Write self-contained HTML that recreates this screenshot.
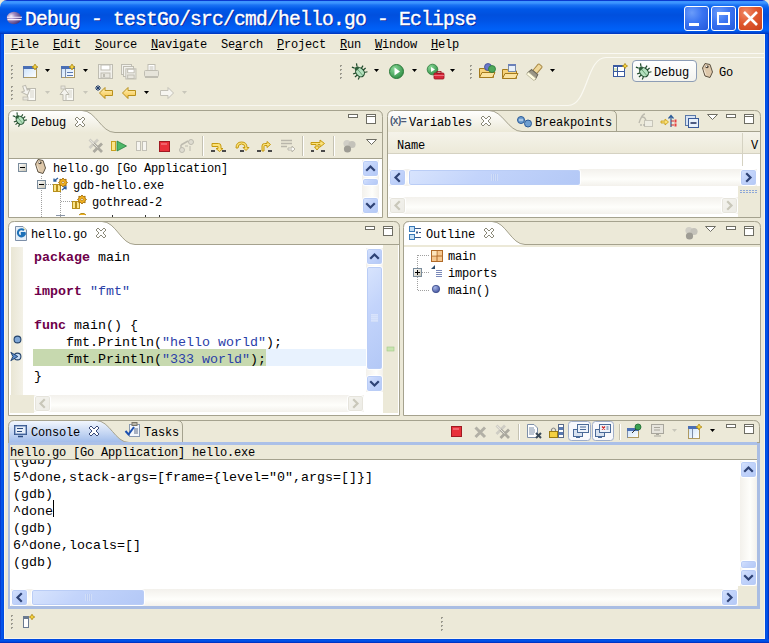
<!DOCTYPE html>
<html><head><meta charset="utf-8">
<style>
*{margin:0;padding:0;box-sizing:border-box}
html,body{width:769px;height:643px;overflow:hidden;background:#ECE9D8;position:relative;font-family:"Liberation Mono",monospace;}
.a{position:absolute;display:block}
.ui{font-family:"Liberation Mono",monospace;font-size:12px;letter-spacing:-0.2px;color:#000;white-space:pre;line-height:14px}
.code{font-family:"Liberation Mono",monospace;font-size:13.33px;white-space:pre;line-height:17px;color:#000}
.kw{color:#6E004A;font-weight:bold}
.st{color:#2A40A8}
.u{text-decoration:underline;text-underline-offset:1px}
</style></head><body>
<div class="a" style="left:0px;top:0px;width:769px;height:34px;background:linear-gradient(to bottom,#0A3AD0 0,#0A3AD0 1px,#3D95FF 1px,#3D95FF 3px,#1A72F4 5px,#0058E8 9px,#0050DE 15px,#0054E6 21px,#005CF2 26px,#0062F8 30px,#0050E0 32px,#0032B8 34px);border-radius:7px 7px 0 0"></div>
<div class="a" style="left:4px;top:34px;width:761px;height:1px;background:#F4F2EC"></div>
<div class="a " style="left:25px;top:7px;font-family:'Liberation Mono',monospace;font-weight:normal;-webkit-text-stroke:0.4px #fff;font-size:19.6px;letter-spacing:-0.76px;color:#fff;white-space:pre;text-shadow:1px 1px 0 #0A1E90;line-height:26px">Debug - testGo/src/cmd/hello.go - Eclipse</div>
<div class="a" style="left:684px;top:6px;width:25px;height:25px;border:1px solid #fff;border-radius:3px;background:radial-gradient(circle at 30% 25%,#6A9CFA 0,#3A74F2 45%,#2358DA 100%)"></div>
<div class="a" style="left:711px;top:6px;width:25px;height:25px;border:1px solid #fff;border-radius:3px;background:radial-gradient(circle at 30% 25%,#6A9CFA 0,#3A74F2 45%,#2358DA 100%)"></div>
<div class="a" style="left:738px;top:6px;width:25px;height:25px;border:1px solid #fff;border-radius:3px;background:radial-gradient(circle at 30% 25%,#F08A68 0,#E0582E 45%,#C8401A 100%)"></div>
<div class="a" style="left:689px;top:23px;width:10px;height:3px;background:#fff"></div>
<div class="a" style="left:717px;top:12px;width:13px;height:13px;border:2px solid #fff;border-top-width:3px"></div>
<svg class="a" style="left:738px;top:6px;" width="25" height="25" viewBox="0 0 25 25"><path d="M6 6L19 19M19 6L6 19" stroke="#fff" stroke-width="2.6"/></svg>
<div class="a" style="left:0px;top:34px;width:4px;height:609px;background:linear-gradient(to right,#0029B8,#0A4FE8 1px,#0058EE 2px,#0046DC)"></div>
<div class="a" style="left:4px;top:34px;width:1px;height:605px;background:#F6F4EC"></div>
<div class="a" style="left:765px;top:34px;width:4px;height:609px;background:linear-gradient(to right,#0046DC,#0058EE 2px,#0029B8)"></div>
<div class="a" style="left:764px;top:34px;width:1px;height:605px;background:#F6F4EC"></div>
<div class="a" style="left:0px;top:639px;width:769px;height:4px;background:linear-gradient(to bottom,#0046DC,#0058EE 2px,#0029B8)"></div>
<div class="a" style="left:4px;top:638px;width:761px;height:1px;background:#F6F4EC"></div>
<div class="a ui" style="left:11px;top:38px;"><span class="u">F</span>ile</div>
<div class="a ui" style="left:53px;top:38px;"><span class="u">E</span>dit</div>
<div class="a ui" style="left:95px;top:38px;"><span class="u">S</span>ource</div>
<div class="a ui" style="left:151px;top:38px;"><span class="u">N</span>avigate</div>
<div class="a ui" style="left:221px;top:38px;">Se<span class="u">a</span>rch</div>
<div class="a ui" style="left:277px;top:38px;"><span class="u">P</span>roject</div>
<div class="a ui" style="left:340px;top:38px;"><span class="u">R</span>un</div>
<div class="a ui" style="left:375px;top:38px;"><span class="u">W</span>indow</div>
<div class="a ui" style="left:431px;top:38px;"><span class="u">H</span>elp</div>
<div class="a" style="left:4px;top:53px;width:760px;height:1px;background:#FAF9F4"></div>
<div class="a" style="left:8px;top:110px;width:375px;height:108px;border:1px solid #A5A28E;border-radius:6px 6px 0 0;background:#ECE9D8"></div>
<svg class="a" style="left:8px;top:110px;" width="375" height="23" viewBox="0 0 375 23"><defs><linearGradient id="g1" x1="0" y1="0" x2="0" y2="1"><stop offset="0" stop-color="#fff"/><stop offset="1" stop-color="#ECE9D8"/></linearGradient></defs><path d="M0 23 V6.5 Q0 0 6.5 0 H368.5 Q375 0 375 6.5 V23 Z" fill="#ECE9D8"/><path d="M0.5 23 L0.5 6.5 Q0.5 0.5 6.5 0.5 L74 0.5 C88 0.5 93 22.5 107 22.5 L375 22.5 L375 23 L0.5 23 Z" fill="url(#g1)"/><path d="M0.5 23 L0.5 6.5 Q0.5 0.5 6.5 0.5 L368.5 0.5 Q374.5 0.5 374.5 6.5 V23" fill="none" stroke="#A5A28E" stroke-width="1"/><path d="M74 0.5 C88 0.5 93 22.5 107 22.5 L374.5 22.5" fill="none" stroke="#A5A28E" stroke-width="1"/></svg>
<div class="a" style="left:9px;top:133px;width:373px;height:25px;background:#ECE9D8"></div>
<div class="a" style="left:9px;top:158px;width:373px;height:59px;background:#fff;border-top:1px solid #A5A28E"></div>
<div class="a ui" style="left:53px;top:162px;">hello.go [Go Application]</div>
<div class="a ui" style="left:73px;top:179px;">gdb-hello.exe</div>
<div class="a ui" style="left:92px;top:196px;">gothread-2</div>
<div class="a" style="left:362px;top:160px;width:17px;height:54px;background:linear-gradient(to right,#F3F1EC,#FEFEFB 60%,#F3F1EC);"></div>
<div class="a" style="left:362px;top:160px;width:17px;height:17px;background:linear-gradient(135deg,#D8E4FD 0%,#C3D4FB 40%,#B3C8F6 100%);border:1px solid #fff;border-radius:3px;box-shadow:inset 0 0 0 1px #BACDF6;"></div>
<svg class="a" style="left:362px;top:160px;" width="17" height="17" viewBox="0 0 17 17"><path d="M5 10 L8.5 6.5 L12 10" fill="none" stroke="#2E4275" stroke-width="2.2" stroke-linecap="square"/></svg>
<div class="a" style="left:362px;top:197px;width:17px;height:17px;background:linear-gradient(135deg,#D8E4FD 0%,#C3D4FB 40%,#B3C8F6 100%);border:1px solid #fff;border-radius:3px;box-shadow:inset 0 0 0 1px #BACDF6;"></div>
<svg class="a" style="left:362px;top:197px;" width="17" height="17" viewBox="0 0 17 17"><path d="M5 7 L8.5 10.5 L12 7" fill="none" stroke="#2E4275" stroke-width="2.2" stroke-linecap="square"/></svg>
<div class="a" style="left:362px;top:178px;width:17px;height:8px;background:linear-gradient(135deg,#D8E4FD 0%,#C3D4FB 40%,#B3C8F6 100%);border:1px solid #fff;border-radius:3px;box-shadow:inset 0 0 0 1px #BACDF6;"></div>
<div class="a ui" style="left:31px;top:116px;">Debug</div>
<div class="a" style="left:387px;top:110px;width:374px;height:108px;border:1px solid #A5A28E;border-radius:6px 6px 0 0;background:#ECE9D8"></div>
<svg class="a" style="left:387px;top:110px;" width="374" height="22" viewBox="0 0 374 22"><defs><linearGradient id="g2" x1="0" y1="0" x2="0" y2="1"><stop offset="0" stop-color="#fff"/><stop offset="1" stop-color="#ECE9D8"/></linearGradient></defs><path d="M0 22 V6.5 Q0 0 6.5 0 H367.5 Q374 0 374 6.5 V22 Z" fill="#ECE9D8"/><path d="M0.5 22 L0.5 6.5 Q0.5 0.5 6.5 0.5 L102 0.5 C116 0.5 121 21.5 135 21.5 L374 21.5 L374 22 L0.5 22 Z" fill="url(#g2)"/><path d="M0.5 22 L0.5 6.5 Q0.5 0.5 6.5 0.5 L367.5 0.5 Q373.5 0.5 373.5 6.5 V22" fill="none" stroke="#A5A28E" stroke-width="1"/><path d="M102 0.5 C116 0.5 121 21.5 135 21.5 L373.5 21.5" fill="none" stroke="#A5A28E" stroke-width="1"/></svg>
<div class="a ui" style="left:409px;top:116px;">Variables</div>
<div class="a ui" style="left:535px;top:116px;">Breakpoints</div>
<svg class="a" style="left:600px;top:110px;" width="20" height="22" viewBox="0 0 20 22"><path d="M16.5 22V6Q16.5 0.5 11 0.5" fill="none" stroke="#A5A28E"/></svg>
<div class="a" style="left:388px;top:132px;width:372px;height:22px;background:linear-gradient(to bottom,#F5F3EA,#ECE9D8)"></div>
<div class="a" style="left:388px;top:153px;width:372px;height:1px;background:#D5D2C2"></div>
<div class="a ui" style="left:397px;top:139px;">Name</div>
<div class="a" style="left:388px;top:154px;width:372px;height:63px;background:#fff"></div>
<div class="a" style="left:389px;top:169px;width:368px;height:17px;background:linear-gradient(to bottom,#F3F1EC,#FEFEFB 60%,#F3F1EC);"></div>
<div class="a" style="left:389px;top:169px;width:17px;height:17px;background:linear-gradient(135deg,#D8E4FD 0%,#C3D4FB 40%,#B3C8F6 100%);border:1px solid #fff;border-radius:3px;box-shadow:inset 0 0 0 1px #BACDF6;"></div>
<svg class="a" style="left:389px;top:169px;" width="17" height="17" viewBox="0 0 17 17"><path d="M10 5 L6.5 8.5 L10 12" fill="none" stroke="#2E4275" stroke-width="2.2" stroke-linecap="square"/></svg>
<div class="a" style="left:740px;top:169px;width:17px;height:17px;background:linear-gradient(135deg,#D8E4FD 0%,#C3D4FB 40%,#B3C8F6 100%);border:1px solid #fff;border-radius:3px;box-shadow:inset 0 0 0 1px #BACDF6;"></div>
<svg class="a" style="left:740px;top:169px;" width="17" height="17" viewBox="0 0 17 17"><path d="M7 5 L10.5 8.5 L7 12" fill="none" stroke="#2E4275" stroke-width="2.2" stroke-linecap="square"/></svg>
<div class="a" style="left:408px;top:169px;width:173px;height:17px;background:linear-gradient(135deg,#D8E4FD 0%,#C3D4FB 40%,#B3C8F6 100%);border:1px solid #fff;border-radius:3px;box-shadow:inset 0 0 0 1px #BACDF6;"></div>
<svg class="a" style="left:490px;top:173px;" width="8" height="9" viewBox="0 0 8 9"><path d="M1.5 1v7M3.5 1v7M5.5 1v7M7.5 1v7" stroke="#EEF3FE" stroke-width="1"/><path d="M2 1v7M4 1v7M6 1v7M8 1v7" stroke="#B2C6F2" stroke-width="1"/></svg>
<div class="a" style="left:389px;top:197px;width:349px;height:17px;background:linear-gradient(to bottom,#F3F1EC,#FEFEFB 60%,#F3F1EC);"></div>
<div class="a" style="left:389px;top:197px;width:17px;height:17px;background:linear-gradient(135deg,#F4F3EE,#ECEBE5);border:1px solid #fff;border-radius:3px;box-shadow:inset 0 0 0 1px #E6E4DC;"></div>
<svg class="a" style="left:389px;top:197px;" width="17" height="17" viewBox="0 0 17 17"><path d="M10 5 L6.5 8.5 L10 12" fill="none" stroke="#C9C7BA" stroke-width="2.2" stroke-linecap="square"/></svg>
<div class="a" style="left:721px;top:197px;width:17px;height:17px;background:linear-gradient(135deg,#F4F3EE,#ECEBE5);border:1px solid #fff;border-radius:3px;box-shadow:inset 0 0 0 1px #E6E4DC;"></div>
<svg class="a" style="left:721px;top:197px;" width="17" height="17" viewBox="0 0 17 17"><path d="M7 5 L10.5 8.5 L7 12" fill="none" stroke="#C9C7BA" stroke-width="2.2" stroke-linecap="square"/></svg>
<div class="a" style="left:738px;top:186px;width:22px;height:31px;background:#ECE9D8"></div>
<div class="a" style="left:8px;top:221px;width:392px;height:195px;border:1px solid #A5A28E;border-radius:6px 6px 0 0;background:#fff"></div>
<svg class="a" style="left:8px;top:221px;" width="392" height="24" viewBox="0 0 392 24"><defs><linearGradient id="g3" x1="0" y1="0" x2="0" y2="1"><stop offset="0" stop-color="#fff"/><stop offset="1" stop-color="#fff"/></linearGradient></defs><path d="M0 24 V6.5 Q0 0 6.5 0 H385.5 Q392 0 392 6.5 V24 Z" fill="#ECE9D8"/><path d="M0.5 24 L0.5 6.5 Q0.5 0.5 6.5 0.5 L94 0.5 C108 0.5 113 23.5 127 23.5 L392 23.5 L392 24 L0.5 24 Z" fill="url(#g3)"/><path d="M0.5 24 L0.5 6.5 Q0.5 0.5 6.5 0.5 L385.5 0.5 Q391.5 0.5 391.5 6.5 V24" fill="none" stroke="#A5A28E" stroke-width="1"/><path d="M94 0.5 C108 0.5 113 23.5 127 23.5 L391.5 23.5" fill="none" stroke="#A5A28E" stroke-width="1"/></svg>
<div class="a ui" style="left:31px;top:228px;">hello.go</div>
<div class="a" style="left:11px;top:247px;width:12px;height:148px;background:linear-gradient(to right,#E9E6D4,#F3F1E7)"></div>
<div class="a" style="left:23px;top:247px;width:9px;height:148px;background:#fff"></div>
<div class="a" style="left:33px;top:349px;width:233px;height:17px;background:#C7D9AF"></div>
<div class="a" style="left:266px;top:349px;width:100px;height:17px;background:#E8F2FE"></div>
<div class="a code" style="left:34px;top:249px;"><span class="kw">package</span> main</div>
<div class="a code" style="left:34px;top:266px;"></div>
<div class="a code" style="left:34px;top:283px;"><span class="kw">import</span> <span class="st">"fmt"</span></div>
<div class="a code" style="left:34px;top:300px;"></div>
<div class="a code" style="left:34px;top:317px;"><span class="kw">func</span> main() {</div>
<div class="a code" style="left:34px;top:334px;">    fmt.Println(<span class="st">"hello world"</span>);</div>
<div class="a code" style="left:34px;top:351px;">    fmt.Println(<span class="st">"333 world"</span>);</div>
<div class="a code" style="left:34px;top:368px;">}</div>
<div class="a" style="left:366px;top:248px;width:17px;height:144px;background:linear-gradient(to right,#F3F1EC,#FEFEFB 60%,#F3F1EC);"></div>
<div class="a" style="left:366px;top:248px;width:17px;height:17px;background:linear-gradient(135deg,#D8E4FD 0%,#C3D4FB 40%,#B3C8F6 100%);border:1px solid #fff;border-radius:3px;box-shadow:inset 0 0 0 1px #BACDF6;"></div>
<svg class="a" style="left:366px;top:248px;" width="17" height="17" viewBox="0 0 17 17"><path d="M5 10 L8.5 6.5 L12 10" fill="none" stroke="#2E4275" stroke-width="2.2" stroke-linecap="square"/></svg>
<div class="a" style="left:366px;top:375px;width:17px;height:17px;background:linear-gradient(135deg,#D8E4FD 0%,#C3D4FB 40%,#B3C8F6 100%);border:1px solid #fff;border-radius:3px;box-shadow:inset 0 0 0 1px #BACDF6;"></div>
<svg class="a" style="left:366px;top:375px;" width="17" height="17" viewBox="0 0 17 17"><path d="M5 7 L8.5 10.5 L12 7" fill="none" stroke="#2E4275" stroke-width="2.2" stroke-linecap="square"/></svg>
<div class="a" style="left:366px;top:266px;width:17px;height:104px;background:linear-gradient(135deg,#D8E4FD 0%,#C3D4FB 40%,#B3C8F6 100%);border:1px solid #fff;border-radius:3px;box-shadow:inset 0 0 0 1px #BACDF6;"></div>
<svg class="a" style="left:366px;top:314px;" width="17" height="8" viewBox="0 0 17 8"><path d="M5 1.5h7M5 3.5h7M5 5.5h7M5 7.5h7" stroke="#B2C6F2" stroke-width="1"/><path d="M5 1h7M5 3h7M5 5h7M5 7h7" stroke="#EEF3FE" stroke-width="1"/></svg>
<div class="a" style="left:383px;top:245px;width:15px;height:168px;background:#ECE9D8"></div>
<div class="a" style="left:34px;top:395px;width:330px;height:17px;background:linear-gradient(to bottom,#F3F1EC,#FEFEFB 60%,#F3F1EC);"></div>
<div class="a" style="left:34px;top:395px;width:17px;height:17px;background:linear-gradient(135deg,#F4F3EE,#ECEBE5);border:1px solid #fff;border-radius:3px;box-shadow:inset 0 0 0 1px #E6E4DC;"></div>
<svg class="a" style="left:34px;top:395px;" width="17" height="17" viewBox="0 0 17 17"><path d="M10 5 L6.5 8.5 L10 12" fill="none" stroke="#C9C7BA" stroke-width="2.2" stroke-linecap="square"/></svg>
<div class="a" style="left:347px;top:395px;width:17px;height:17px;background:linear-gradient(135deg,#F4F3EE,#ECEBE5);border:1px solid #fff;border-radius:3px;box-shadow:inset 0 0 0 1px #E6E4DC;"></div>
<svg class="a" style="left:347px;top:395px;" width="17" height="17" viewBox="0 0 17 17"><path d="M7 5 L10.5 8.5 L7 12" fill="none" stroke="#C9C7BA" stroke-width="2.2" stroke-linecap="square"/></svg>
<div class="a" style="left:10px;top:395px;width:24px;height:18px;background:#ECE9D8"></div>
<div class="a" style="left:403px;top:221px;width:358px;height:195px;border:1px solid #A5A28E;border-radius:6px 6px 0 0;background:#fff"></div>
<svg class="a" style="left:403px;top:221px;" width="358" height="24" viewBox="0 0 358 24"><defs><linearGradient id="g4" x1="0" y1="0" x2="0" y2="1"><stop offset="0" stop-color="#fff"/><stop offset="1" stop-color="#fff"/></linearGradient></defs><path d="M0 24 V6.5 Q0 0 6.5 0 H351.5 Q358 0 358 6.5 V24 Z" fill="#ECE9D8"/><path d="M0.5 24 L0.5 6.5 Q0.5 0.5 6.5 0.5 L89 0.5 C103 0.5 108 23.5 122 23.5 L358 23.5 L358 24 L0.5 24 Z" fill="url(#g4)"/><path d="M0.5 24 L0.5 6.5 Q0.5 0.5 6.5 0.5 L351.5 0.5 Q357.5 0.5 357.5 6.5 V24" fill="none" stroke="#A5A28E" stroke-width="1"/><path d="M89 0.5 C103 0.5 108 23.5 122 23.5 L357.5 23.5" fill="none" stroke="#A5A28E" stroke-width="1"/></svg>
<div class="a" style="left:404px;top:245px;width:356px;height:2px;background:#ECE9D8"></div>
<div class="a ui" style="left:426px;top:228px;">Outline</div>
<div class="a ui" style="left:448px;top:250px;">main</div>
<div class="a ui" style="left:448px;top:267px;">imports</div>
<div class="a ui" style="left:448px;top:284px;">main()</div>
<div class="a" style="left:8px;top:420px;width:752px;height:189px;border:1px solid #A0A098;border-radius:6px 6px 0 0;background:#fff"></div>
<div class="a" style="left:8px;top:440px;width:2px;height:169px;background:#A9BDE3"></div>
<div class="a" style="left:757px;top:440px;width:3px;height:169px;background:#A9BDE3"></div>
<div class="a" style="left:8px;top:606px;width:752px;height:3px;background:#A9BDE3"></div>
<svg class="a" style="left:8px;top:420px;" width="752" height="23" viewBox="0 0 752 23"><defs><linearGradient id="g5" x1="0" y1="0" x2="0" y2="1"><stop offset="0" stop-color="#F4F8FE"/><stop offset="1" stop-color="#9FBBEA"/></linearGradient></defs><path d="M0 23 V6.5 Q0 0 6.5 0 H745.5 Q752 0 752 6.5 V23 Z" fill="#ECE9D8"/><path d="M0.5 23 L0.5 6.5 Q0.5 0.5 6.5 0.5 L88 0.5 C102 0.5 107 22.5 121 22.5 L752 22.5 L752 23 L0.5 23 Z" fill="url(#g5)"/><path d="M0.5 23 L0.5 6.5 Q0.5 0.5 6.5 0.5 L745.5 0.5 Q751.5 0.5 751.5 6.5 V23" fill="none" stroke="#A5A28E" stroke-width="1"/><path d="M88 0.5 C102 0.5 107 22.5 121 22.5 L751.5 22.5" fill="none" stroke="#A5A28E" stroke-width="1"/></svg>
<svg class="a" style="left:100px;top:420px;" width="90" height="23" viewBox="0 0 90 23"><path d="M82.5 23V6Q82.5 0.5 77 0.5" fill="none" stroke="#A5A28E"/></svg>
<div class="a" style="left:10px;top:442px;width:747px;height:3px;background:#ABC0E8"></div>
<div class="a ui" style="left:31px;top:426px;">Console</div>
<div class="a ui" style="left:144px;top:426px;">Tasks</div>
<div class="a code" style="left:13px;top:452px;">(gdb)</div>
<div class="a code" style="left:13px;top:469px;">5^done,stack-args=[frame={level="0",args=[]}]</div>
<div class="a code" style="left:13px;top:486px;">(gdb)</div>
<div class="a code" style="left:13px;top:503px;">^done</div>
<div class="a code" style="left:13px;top:520px;">(gdb)</div>
<div class="a code" style="left:13px;top:537px;">6^done,locals=[]</div>
<div class="a code" style="left:13px;top:554px;">(gdb)</div>
<div class="a" style="left:10px;top:445px;width:747px;height:15px;background:#ECE9D8;border-bottom:1px solid #A5A28E"></div>
<div class="a ui" style="left:10px;top:446px;">hello.go [Go Application] hello.exe</div>
<div class="a" style="left:740px;top:461px;width:17px;height:125px;background:linear-gradient(to right,#F3F1EC,#FEFEFB 60%,#F3F1EC);"></div>
<div class="a" style="left:740px;top:461px;width:17px;height:17px;background:linear-gradient(135deg,#D8E4FD 0%,#C3D4FB 40%,#B3C8F6 100%);border:1px solid #fff;border-radius:3px;box-shadow:inset 0 0 0 1px #BACDF6;"></div>
<svg class="a" style="left:740px;top:461px;" width="17" height="17" viewBox="0 0 17 17"><path d="M5 10 L8.5 6.5 L12 10" fill="none" stroke="#2E4275" stroke-width="2.2" stroke-linecap="square"/></svg>
<div class="a" style="left:740px;top:569px;width:17px;height:17px;background:linear-gradient(135deg,#D8E4FD 0%,#C3D4FB 40%,#B3C8F6 100%);border:1px solid #fff;border-radius:3px;box-shadow:inset 0 0 0 1px #BACDF6;"></div>
<svg class="a" style="left:740px;top:569px;" width="17" height="17" viewBox="0 0 17 17"><path d="M5 7 L8.5 10.5 L12 7" fill="none" stroke="#2E4275" stroke-width="2.2" stroke-linecap="square"/></svg>
<div class="a" style="left:740px;top:560px;width:17px;height:9px;background:linear-gradient(135deg,#D8E4FD 0%,#C3D4FB 40%,#B3C8F6 100%);border:1px solid #fff;border-radius:3px;box-shadow:inset 0 0 0 1px #BACDF6;"></div>
<div class="a" style="left:11px;top:589px;width:727px;height:17px;background:linear-gradient(to bottom,#F3F1EC,#FEFEFB 60%,#F3F1EC);"></div>
<div class="a" style="left:11px;top:589px;width:17px;height:17px;background:linear-gradient(135deg,#D8E4FD 0%,#C3D4FB 40%,#B3C8F6 100%);border:1px solid #fff;border-radius:3px;box-shadow:inset 0 0 0 1px #BACDF6;"></div>
<svg class="a" style="left:11px;top:589px;" width="17" height="17" viewBox="0 0 17 17"><path d="M10 5 L6.5 8.5 L10 12" fill="none" stroke="#2E4275" stroke-width="2.2" stroke-linecap="square"/></svg>
<div class="a" style="left:721px;top:589px;width:17px;height:17px;background:linear-gradient(135deg,#D8E4FD 0%,#C3D4FB 40%,#B3C8F6 100%);border:1px solid #fff;border-radius:3px;box-shadow:inset 0 0 0 1px #BACDF6;"></div>
<svg class="a" style="left:721px;top:589px;" width="17" height="17" viewBox="0 0 17 17"><path d="M7 5 L10.5 8.5 L7 12" fill="none" stroke="#2E4275" stroke-width="2.2" stroke-linecap="square"/></svg>
<div class="a" style="left:31px;top:589px;width:114px;height:17px;background:linear-gradient(135deg,#D8E4FD 0%,#C3D4FB 40%,#B3C8F6 100%);border:1px solid #fff;border-radius:3px;box-shadow:inset 0 0 0 1px #BACDF6;"></div>
<svg class="a" style="left:84px;top:593px;" width="8" height="9" viewBox="0 0 8 9"><path d="M1.5 1v7M3.5 1v7M5.5 1v7M7.5 1v7" stroke="#EEF3FE" stroke-width="1"/><path d="M2 1v7M4 1v7M6 1v7M8 1v7" stroke="#B2C6F2" stroke-width="1"/></svg>
<div class="a" style="left:738px;top:586px;width:19px;height:20px;background:#ECE9D8"></div>
<div class="a" style="left:4px;top:105px;width:564px;height:1px;background:#F8F7F0"></div>
<svg class="a" style="left:560px;top:50px;" width="209" height="60" viewBox="0 0 209 60"><path d="M0 55.5H8C28 55.5 26 7.5 46 7.5H204" fill="none" stroke="#FAF9F2" stroke-width="1.2"/></svg>
<div class="a" style="left:632px;top:60px;width:65px;height:22px;border:1px solid #8D9DB5;border-radius:4px;background:linear-gradient(to bottom,#FFFFFF,#F3F3EE)"></div>
<div class="a ui" style="left:654px;top:66px;">Debug</div>
<div class="a ui" style="left:719px;top:66px;">Go</div>
<div class="a ui" style="left:751px;top:139px;">V</div>
<svg class="a" style="left:0;top:0" width="769" height="643" viewBox="0 0 769 643"><defs>
<linearGradient id="wfill" x1="0" y1="0" x2="1" y2="1"><stop offset="0" stop-color="#C8E0FA"/><stop offset="1" stop-color="#FFFFFF"/></linearGradient>
<linearGradient id="pmfill" x1="0" y1="0" x2="1" y2="1"><stop offset="0" stop-color="#FFFFFF"/><stop offset="1" stop-color="#C6C2B2"/></linearGradient>
<linearGradient id="yarrowfill" x1="0" y1="0" x2="0" y2="1"><stop offset="0" stop-color="#FFF4C0"/><stop offset="1" stop-color="#F6C040"/></linearGradient>
<radialGradient id="greenball" cx="0.35" cy="0.3" r="0.8"><stop offset="0" stop-color="#8AD898"/><stop offset="1" stop-color="#2A8A40"/></radialGradient>
<radialGradient id="blueball" cx="0.35" cy="0.3" r="0.8"><stop offset="0" stop-color="#A8B8E8"/><stop offset="1" stop-color="#3A4A98"/></radialGradient>
</defs><defs><radialGradient id="eclball" cx="0.3" cy="0.35" r="0.8"><stop offset="0" stop-color="#F4ECF8"/><stop offset="0.35" stop-color="#A08AC0"/><stop offset="1" stop-color="#3A2A70"/></radialGradient></defs><ellipse cx="14" cy="18" rx="7.2" ry="6.2" fill="url(#eclball)"/><path d="M7 17.2h15M7.5 19.6h14" stroke="#F6F0FF" stroke-width="1.1"/><rect x="11" y="65" width="2" height="2" fill="#9C9A8C"/><rect x="12" y="66" width="1" height="1" fill="#fff" opacity="0.7"/><rect x="11" y="69" width="2" height="2" fill="#9C9A8C"/><rect x="12" y="70" width="1" height="1" fill="#fff" opacity="0.7"/><rect x="11" y="73" width="2" height="2" fill="#9C9A8C"/><rect x="12" y="74" width="1" height="1" fill="#fff" opacity="0.7"/><rect x="11" y="77" width="2" height="2" fill="#9C9A8C"/><rect x="12" y="78" width="1" height="1" fill="#fff" opacity="0.7"/><rect x="11" y="86" width="2" height="2" fill="#9C9A8C"/><rect x="12" y="87" width="1" height="1" fill="#fff" opacity="0.7"/><rect x="11" y="90" width="2" height="2" fill="#9C9A8C"/><rect x="12" y="91" width="1" height="1" fill="#fff" opacity="0.7"/><rect x="11" y="94" width="2" height="2" fill="#9C9A8C"/><rect x="12" y="95" width="1" height="1" fill="#fff" opacity="0.7"/><rect x="11" y="98" width="2" height="2" fill="#9C9A8C"/><rect x="12" y="99" width="1" height="1" fill="#fff" opacity="0.7"/><rect x="340" y="65" width="2" height="2" fill="#9C9A8C"/><rect x="341" y="66" width="1" height="1" fill="#fff" opacity="0.7"/><rect x="340" y="69" width="2" height="2" fill="#9C9A8C"/><rect x="341" y="70" width="1" height="1" fill="#fff" opacity="0.7"/><rect x="340" y="73" width="2" height="2" fill="#9C9A8C"/><rect x="341" y="74" width="1" height="1" fill="#fff" opacity="0.7"/><rect x="340" y="77" width="2" height="2" fill="#9C9A8C"/><rect x="341" y="78" width="1" height="1" fill="#fff" opacity="0.7"/><rect x="470" y="65" width="2" height="2" fill="#9C9A8C"/><rect x="471" y="66" width="1" height="1" fill="#fff" opacity="0.7"/><rect x="470" y="69" width="2" height="2" fill="#9C9A8C"/><rect x="471" y="70" width="1" height="1" fill="#fff" opacity="0.7"/><rect x="470" y="73" width="2" height="2" fill="#9C9A8C"/><rect x="471" y="74" width="1" height="1" fill="#fff" opacity="0.7"/><rect x="470" y="77" width="2" height="2" fill="#9C9A8C"/><rect x="471" y="78" width="1" height="1" fill="#fff" opacity="0.7"/><rect x="11" y="615" width="2" height="2" fill="#9C9A8C"/><rect x="12" y="616" width="1" height="1" fill="#fff" opacity="0.7"/><rect x="11" y="619" width="2" height="2" fill="#9C9A8C"/><rect x="12" y="620" width="1" height="1" fill="#fff" opacity="0.7"/><rect x="11" y="623" width="2" height="2" fill="#9C9A8C"/><rect x="12" y="624" width="1" height="1" fill="#fff" opacity="0.7"/><rect x="11" y="627" width="2" height="2" fill="#9C9A8C"/><rect x="12" y="628" width="1" height="1" fill="#fff" opacity="0.7"/><rect x="23.5" y="66.5" width="13" height="11" fill="url(#wfill)" stroke="#7D8CA8" stroke-width="1"/><rect x="23" y="66" width="14" height="3" fill="#4A6FB5"/><path d="M36.5 69V77.5H24" stroke="#B09A60" fill="none"/><path d="M35 64L36.05 65.95L38 67L36.05 68.05L35 70L33.95 68.05L32 67L33.95 65.95Z" fill="#F4D23C" stroke="#B08A18" stroke-width="0.8"/><path d="M45 69h5l-2.5 3z" fill="#000"/><rect x="61.5" y="66.5" width="13" height="11" fill="url(#wfill)" stroke="#7D8CA8" stroke-width="1"/><rect x="61" y="66" width="14" height="3" fill="#4A6FB5"/><path d="M74.5 69V77.5H62" stroke="#B09A60" fill="none"/><rect x="65" y="69" width="1" height="9" fill="#7D8CA8"/><path d="M67 72.5h6M67 75.5h6" stroke="#5A78B0"/><path d="M72 64L73.05 65.95L75 67L73.05 68.05L72 70L70.95 68.05L69 67L70.95 65.95Z" fill="#F4D23C" stroke="#B08A18" stroke-width="0.8"/><path d="M83 69h5l-2.5 3z" fill="#000"/><g transform="translate(98,64)"><rect x="0.5" y="0.5" width="14" height="14" fill="#F2F1EC" stroke="#BFBDB2"/><rect x="3" y="1" width="9" height="5" fill="#fff" stroke="#BFBDB2"/><rect x="3" y="9" width="9" height="5" fill="#E8E6DE" stroke="#BFBDB2"/><rect x="5" y="10" width="2" height="3" fill="#BFBDB2"/></g><rect x="121.5" y="64.5" width="10" height="10" fill="#F2F1EC" stroke="#BFBDB2"/><rect x="123.5" y="66.5" width="10" height="10" fill="#F2F1EC" stroke="#BFBDB2"/><g transform="translate(125.5,68.5) scale(0.72)"><rect x="0.5" y="0.5" width="14" height="14" fill="#F2F1EC" stroke="#BFBDB2" stroke-width="1.4"/><rect x="3" y="1" width="9" height="5" fill="#fff" stroke="#BFBDB2" stroke-width="1.4"/><rect x="3" y="9" width="9" height="5" fill="#E8E6DE" stroke="#BFBDB2" stroke-width="1.4"/></g><g transform="translate(144,64)"><rect x="4" y="0.5" width="7" height="7" fill="#fff" stroke="#BFBDB2"/><path d="M5.5 3h4M5.5 5h4" stroke="#BFBDB2"/><rect x="0.5" y="6.5" width="14" height="6" rx="1" fill="#E6E4DA" stroke="#BFBDB2"/><rect x="1" y="12" width="13" height="2" fill="#BFBDB2"/></g><g transform="translate(351,63) scale(1.0) rotate(-40 8 8)"><path d="M1.5 6.5L4.5 7.5M14.5 6.5L11.5 7.5M1 10h3.5M15 10h-3.5M2 14L5 12.5M14 14L11 12.5M6.5 3L5 0.5M9.5 3L11 0.5" stroke="#1F4A2A" stroke-width="1.2"/><ellipse cx="8" cy="9.6" rx="3.9" ry="4.9" fill="#B4E0BE" stroke="#1F4A2A" stroke-width="1.1"/><ellipse cx="8" cy="4.6" rx="2.4" ry="1.7" fill="#2E5E3A"/><path d="M8 6v8" stroke="#5E9A6A" stroke-width="0.8"/></g><path d="M374 69h5l-2.5 3z" fill="#000"/><g transform="translate(389,64)"><circle cx="7.5" cy="7.5" r="7" fill="url(#greenball)" stroke="#2C7A3A" stroke-width="1"/><path d="M5.5 3.5L11 7.5L5.5 11.5Z" fill="#fff"/></g><path d="M412 69h5l-2.5 3z" fill="#000"/><g transform="translate(427,64)"><circle cx="5.5" cy="5.5" r="5.3" fill="url(#greenball)" stroke="#2C7A3A" stroke-width="0.8"/><path d="M4 3L8 5.5L4 8Z" fill="#fff"/><rect x="7" y="9" width="10" height="6" rx="1" fill="#D8283A" stroke="#9A1020" stroke-width="0.8"/><rect x="10" y="7.5" width="4" height="2" fill="none" stroke="#9A1020" stroke-width="0.8"/><path d="M7 11.5h10" stroke="#F08090" stroke-width="0.8"/></g><path d="M450 69h5l-2.5 3z" fill="#000"/><g transform="translate(479,64)"><path d="M0.5 4.5h5l1 1.5h8v7.5h-14z" fill="#F6D27A" stroke="#A47A1C"/><path d="M0.5 13.5L3 8.5H16L13.5 13.5Z" fill="#FBE3A0" stroke="#A47A1C"/></g><circle cx="488" cy="67" r="3.5" fill="#6A78C8" stroke="#3A4898" stroke-width="0.8"/><circle cx="492" cy="69" r="3.5" fill="#4EA85A" stroke="#2A7838" stroke-width="0.8"/><g transform="translate(502,65)"><path d="M0.5 4.5h5l1 1.5h8v7.5h-14z" fill="#F6D27A" stroke="#A47A1C"/><path d="M0.5 13.5L3 8.5H16L13.5 13.5Z" fill="#FBE3A0" stroke="#A47A1C"/></g><rect x="508.5" y="64.5" width="7" height="7" fill="#E8F0FA" stroke="#7A8CA8"/><rect x="508" y="64" width="8" height="2" fill="#6A80B8"/><g transform="translate(527,63) rotate(40 8 8)"><rect x="6" y="0" width="5" height="9" rx="1" fill="#F0D89A" stroke="#A88A48"/><path d="M4.5 9h8l1 5h-10z" fill="#9A9686" stroke="#6A6658"/><rect x="3.5" y="13" width="10" height="3" fill="#FFFCE0" stroke="#B8B49A" stroke-width="0.8"/></g><path d="M550 69h5l-2.5 3z" fill="#000"/><g transform="translate(22,85)"><rect x="5.5" y="3.5" width="8" height="12" fill="#FAFAF6" stroke="#BDBBB0"/><path d="M8 6h4M8 8h4M8 10h4M8 12h4" stroke="#D6D4CA"/></g><g transform="translate(22,85)"><path d="M2.5 0.5h3v5h3l-4.5 5-4.5-5h3z" fill="#F4F3EE" stroke="#BDBBB0" transform="rotate(-20 4 6)"/><rect x="1" y="12" width="5" height="3" fill="#E8E6DE" stroke="#BDBBB0" stroke-width="0.8"/></g><path d="M45 91h5l-2.5 3z" fill="#C8C6BA"/><g transform="translate(60,85)"><rect x="5.5" y="3.5" width="8" height="12" fill="#FAFAF6" stroke="#BDBBB0"/><path d="M8 6h4M8 8h4M8 10h4M8 12h4" stroke="#D6D4CA"/></g><g transform="translate(60,85)"><path d="M5 15.5h-3v-6h-3l4.5-6 4.5 6h-3z" fill="#F4F3EE" stroke="#BDBBB0" transform="translate(1,0)"/><rect x="1" y="1" width="4" height="3" fill="#E8E6DE" stroke="#BDBBB0" stroke-width="0.8"/></g><path d="M83 91h5l-2.5 3z" fill="#C8C6BA"/><g transform="translate(99,87)"><path d="M0.5 6L6 0.5V3.5H13.5V8.5H6V11.5Z" fill="url(#yarrowfill)" stroke="#B8901C" stroke-width="1"/></g><path d="M96 86l4 4M100 86l-4 4M98 85v6M95 88h6" stroke="#203C6A" stroke-width="1"/><g transform="translate(122,87)"><path d="M0.5 6L6 0.5V3.5H13.5V8.5H6V11.5Z" fill="url(#yarrowfill)" stroke="#B8901C" stroke-width="1"/></g><path d="M144 91h5l-2.5 3z" fill="#000"/><g transform="translate(160,87)"><path d="M13.5 6L8 0.5V3.5H0.5V8.5H8V11.5Z" fill="#F6F5F0" stroke="#C2C0B6" stroke-width="1"/></g><path d="M182 91h5l-2.5 3z" fill="#C8C6BA"/><g transform="translate(613,63)"><rect x="0.5" y="2.5" width="11" height="11" fill="#fff" stroke="#3A5AA0"/><rect x="0" y="2" width="12" height="2" fill="#3A5AA0"/><path d="M4.5 4v9.5M0.5 8.5h11" stroke="#3A5AA0"/><rect x="1" y="5" width="3" height="3" fill="#D8E8C0"/></g><path d="M625 63.4L625.91 65.09L627.6 66L625.91 66.91L625 68.6L624.09 66.91L622.4 66L624.09 65.09Z" fill="#F4D23C" stroke="#B08A18" stroke-width="0.8"/><g transform="translate(635,63) scale(1.0) rotate(-40 8 8)"><path d="M1.5 6.5L4.5 7.5M14.5 6.5L11.5 7.5M1 10h3.5M15 10h-3.5M2 14L5 12.5M14 14L11 12.5M6.5 3L5 0.5M9.5 3L11 0.5" stroke="#1F4A2A" stroke-width="1.2"/><ellipse cx="8" cy="9.6" rx="3.9" ry="4.9" fill="#B4E0BE" stroke="#1F4A2A" stroke-width="1.1"/><ellipse cx="8" cy="4.6" rx="2.4" ry="1.7" fill="#2E5E3A"/><path d="M8 6v8" stroke="#5E9A6A" stroke-width="0.8"/></g><g transform="translate(702,63)"><path d="M3 0.5L8 1.5L10.5 9L8 14.5L3 13L0.5 5Z" fill="#DEC8AA" stroke="#5E5444" stroke-width="1"/><ellipse cx="5" cy="3.8" rx="1.7" ry="1.4" fill="#4A4236"/><ellipse cx="4.4" cy="3.3" rx="0.9" ry="0.7" fill="#fff"/><path d="M2 6.5L4 12" stroke="#F0E4D2" stroke-width="1"/></g><g transform="translate(12,112) scale(0.9) rotate(-40 8 8)"><path d="M1.5 6.5L4.5 7.5M14.5 6.5L11.5 7.5M1 10h3.5M15 10h-3.5M2 14L5 12.5M14 14L11 12.5M6.5 3L5 0.5M9.5 3L11 0.5" stroke="#1F4A2A" stroke-width="1.2"/><ellipse cx="8" cy="9.6" rx="3.9" ry="4.9" fill="#B4E0BE" stroke="#1F4A2A" stroke-width="1.1"/><ellipse cx="8" cy="4.6" rx="2.4" ry="1.7" fill="#2E5E3A"/><path d="M8 6v8" stroke="#5E9A6A" stroke-width="0.8"/></g><path d="M77 117L80 120L83 117L85 119L82 122L85 125L83 127L80 124L77 127L75 125L78 122L75 119Z" fill="#fff" stroke="#8A8878" stroke-width="1"/><rect x="348.5" y="114.5" width="9" height="3" fill="#fff" stroke="#6E6D63"/><rect x="366.5" y="114.5" width="9" height="9" fill="#fff" stroke="#6E6D63"/><rect x="367" y="116" width="8" height="1" fill="#6E6D63"/><g transform="translate(88,138) scale(1)"><path d="M1.5 1.5L10 10M10 1.5L1.5 10" stroke="#CFCDC4" stroke-width="2.8"/><path d="M5.5 5.5L14 14M14 5.5L5.5 14" stroke="#ABA99F" stroke-width="2.8"/><path d="M2 2L9.5 9.5" stroke="#E6E4DC" stroke-width="1"/></g><rect x="111.5" y="141.5" width="4" height="9" fill="#FBE58A" stroke="#C8A020"/><path d="M117 141L126.5 146L117 151Z" fill="#4EB868" stroke="#2A8040" stroke-width="0.8"/><rect x="136.5" y="141.5" width="4" height="9" fill="#F6F5F0" stroke="#C2C0B6"/><rect x="142.5" y="141.5" width="4" height="9" fill="#F6F5F0" stroke="#C2C0B6"/><rect x="159.5" y="141.5" width="10" height="10" fill="#E8303A" stroke="#A01A22"/><rect x="161" y="143" width="6" height="2" fill="#F27078" opacity="0.8"/><g opacity="0.8"><path d="M181 152V145M181 145L188 141" stroke="#B2B0A6" stroke-width="1.5"/><circle cx="191" cy="142" r="2.5" fill="#DCDAD0" stroke="#B2B0A6"/><circle cx="182" cy="150" r="2.5" fill="#DCDAD0" stroke="#B2B0A6"/><path d="M185 146h3M190 146v5" stroke="#B2B0A6"/></g><rect x="202" y="136" width="1" height="20" fill="#C5C2B2"/><rect x="203" y="136" width="1" height="20" fill="#FFFFFF"/><g transform="translate(211,141)"><path d="M1 2.5H7.5Q10 2.5 10 5V7.5H12L8.5 10.5L5 7.5H7V5.5H1Z" fill="#FBE27A" stroke="#C69A10" stroke-width="1"/><rect x="0" y="9" width="4" height="2" fill="#4A4A4A"/><rect x="11" y="9" width="4" height="2" fill="#4A4A4A"/></g><g transform="translate(234,141)"><path d="M2 7Q2 1 7.5 1Q13 1 13 6.5H15L12 9.5L9 6.5H11Q11 3 7.5 3Q4 3 4 7Z" fill="#FBE27A" stroke="#C69A10" stroke-width="1"/><rect x="6" y="9" width="4" height="2" fill="#4A4A4A"/></g><g transform="translate(257,141)"><path d="M5 10V5Q5 2.5 7.5 2.5H10V0.5L13.5 3.5L10 6.5V4.5H8Q7 4.5 7 5.5V10Z" fill="#FBE27A" stroke="#C69A10" stroke-width="1"/><rect x="0" y="9" width="4" height="2" fill="#4A4A4A"/><rect x="11" y="9" width="4" height="2" fill="#4A4A4A"/></g><g transform="translate(280,139)" opacity="0.75"><path d="M1 1.5h11M1 4.5h11M1 7.5h6" stroke="#A8A69C" stroke-width="1.6"/><path d="M8 9h4V7l3 3-3 3v-2H8Z" fill="#fff" stroke="#A8A69C"/></g><rect x="302" y="136" width="1" height="20" fill="#C5C2B2"/><rect x="303" y="136" width="1" height="20" fill="#FFFFFF"/><g transform="translate(310,139)"><path d="M1 3.5H10V1L14.5 4.5L10 8V5.5H8V8H9.5L7 11L4.5 8H6V5.5H1Z" fill="#FBE27A" stroke="#C69A10" stroke-width="1"/><rect x="1" y="11" width="3" height="2" fill="#4A4A4A"/><rect x="11" y="11" width="4" height="2" fill="#4A4A4A"/></g><rect x="333" y="136" width="1" height="20" fill="#C5C2B2"/><rect x="334" y="136" width="1" height="20" fill="#FFFFFF"/><g transform="translate(342,139)"><circle cx="5" cy="4.5" r="3.6" fill="#D0CEC6"/><circle cx="10" cy="5.5" r="3.6" fill="#C4C2BA"/><circle cx="5.5" cy="10" r="3.6" fill="#9E9C94"/></g><path d="M366.5 139.5h10l-5 5z" fill="#fff" stroke="#6E6D63" stroke-width="1"/><rect x="18.5" y="163.5" width="8" height="8" fill="url(#pmfill)" stroke="#7A8C9C"/><path d="M20 167.5h5" stroke="#000"/><g transform="translate(35,159)"><path d="M3 0.5L8 1.5L10.5 9L8 14.5L3 13L0.5 5Z" fill="#DEC8AA" stroke="#5E5444" stroke-width="1"/><ellipse cx="5" cy="3.8" rx="1.7" ry="1.4" fill="#4A4236"/><ellipse cx="4.4" cy="3.3" rx="0.9" ry="0.7" fill="#fff"/><path d="M2 6.5L4 12" stroke="#F0E4D2" stroke-width="1"/></g><path d="M41.5 176V217" stroke="#A0A0A0" stroke-dasharray="1 1"/><rect x="37.5" y="180.5" width="8" height="8" fill="url(#pmfill)" stroke="#7A8C9C"/><path d="M39 184.5h5" stroke="#000"/><path d="M46 184.5H53" stroke="#A0A0A0" stroke-dasharray="1 1"/><rect x="53.5" y="184.5" width="3" height="7" fill="#FBE58A" stroke="#B8901C"/><rect x="57.5" y="184.5" width="3" height="7" fill="#FBE58A" stroke="#B8901C"/><path d="M67.50 182.50L65.96 183.72L66.18 185.68L64.22 185.46L63.00 187.00L61.78 185.46L59.82 185.68L60.04 183.72L58.50 182.50L60.04 181.28L59.82 179.32L61.78 179.54L63.00 178.00L64.22 179.54L66.18 179.32L65.96 181.28Z" fill="#F0B020" stroke="#9E6A08" stroke-width="0.9"/><circle cx="63" cy="182.5" r="1.1" fill="#fff" stroke="#9E6A08" stroke-width="0.6"/><path d="M58 178L54 181M54 178.5V181H56.5" stroke="#2F5E9C" stroke-width="1.3" fill="none"/><path d="M62 190L66 187M66 189.5V187H63.5" stroke="#2F5E9C" stroke-width="1.3" fill="none"/><path d="M60.5 192V217" stroke="#A0A0A0" stroke-dasharray="1 1"/><path d="M61 201.5H72" stroke="#A0A0A0" stroke-dasharray="1 1"/><rect x="72.5" y="201.5" width="3" height="7" fill="#FBE58A" stroke="#B8901C"/><rect x="76.5" y="201.5" width="3" height="7" fill="#FBE58A" stroke="#B8901C"/><path d="M86.50 199.50L84.96 200.72L85.18 202.68L83.22 202.46L82.00 204.00L80.78 202.46L78.82 202.68L79.04 200.72L77.50 199.50L79.04 198.28L78.82 196.32L80.78 196.54L82.00 195.00L83.22 196.54L85.18 196.32L84.96 198.28Z" fill="#F0B020" stroke="#9E6A08" stroke-width="0.9"/><circle cx="82" cy="199.5" r="1.1" fill="#fff" stroke="#9E6A08" stroke-width="0.6"/><path d="M56 215.5h9" stroke="#8A96A8"/><path d="M79 215l2-1.5h3l2 1.5" stroke="#B8901C" fill="#F0B020"/><rect x="112" y="215" width="1" height="2" fill="#333"/><rect x="145" y="215" width="1" height="2" fill="#333"/><rect x="159" y="215" width="1" height="2" fill="#333"/><text x="390" y="124" font-family="Liberation Sans" font-weight="bold" font-size="10" fill="#4A5A78" letter-spacing="-0.5">(x)=</text><path d="M483 116L486 119L489 116L491 118L488 121L491 124L489 126L486 123L483 126L481 124L484 121L481 118Z" fill="#fff" stroke="#8A8878" stroke-width="1"/><circle cx="521" cy="120" r="3.5" fill="#6E9ED0" stroke="#2A5A98"/><path d="M519 120h4" stroke="#fff" stroke-width="0.8"/><circle cx="528" cy="123.5" r="3.5" fill="#6E9ED0" stroke="#2A5A98"/><g opacity="0.7"><path d="M639 123q3-9 6-9M642 117q4 0 4 5" stroke="#A8A69C" fill="none" stroke-width="1.3"/><rect x="644.5" y="120.5" width="8" height="6" fill="#F0EFE8" stroke="#B8B6AC"/><path d="M640 125h2M643 125h2" stroke="#888"/></g><path d="M661 121h4v-2l3.5 3-3.5 3v-2h-4z" fill="#FBE27A" stroke="#C69A10" stroke-width="0.8"/><path d="M671 127V116M668.5 118.5L671 115.5L673.5 118.5" stroke="#2A5A98" stroke-width="1.2" fill="none"/><path d="M671 121h3M671 125h3" stroke="#C83030"/><rect x="674.5" y="119.5" width="2" height="3" fill="#E84040"/><rect x="674.5" y="123.5" width="2" height="3" fill="#E84040"/><rect x="685.5" y="115.5" width="10" height="10" fill="#D8E4F4" stroke="#5A78A8"/><rect x="688.5" y="118.5" width="10" height="9" fill="#E8F0FA" stroke="#3A5A98"/><path d="M690.5 123h6" stroke="#1A2A58" stroke-width="1.5"/><path d="M707.5 114.5h10l-5 5z" fill="#fff" stroke="#6E6D63" stroke-width="1"/><rect x="726.5" y="114.5" width="9" height="3" fill="#fff" stroke="#6E6D63"/><rect x="744.5" y="114.5" width="9" height="9" fill="#fff" stroke="#6E6D63"/><rect x="745" y="116" width="8" height="1" fill="#6E6D63"/><path d="M742.5 133V166" stroke="#D5D2C2"/><path d="M740 190.5h17M740 192.5h17" stroke="#8EA8D8" stroke-dasharray="2 1"/><g transform="translate(15,226)"><path d="M0.5 0.5H8L11.5 4V14.5H0.5Z" fill="#E4EEF8" stroke="#7D8FA8"/><path d="M8.5 3.5L11 4.5L9 0.5Z" fill="#FCEFB0"/><path d="M9 4.2A3.6 3.6 0 1 0 9.6 8.6H6.8V7H10.6" fill="none" stroke="#1C70B8" stroke-width="2"/></g><path d="M98 228L101 231L104 228L106 230L103 233L106 236L104 238L101 235L98 238L96 236L99 233L96 230Z" fill="#fff" stroke="#8A8878" stroke-width="1"/><rect x="365.5" y="226.5" width="9" height="3" fill="#fff" stroke="#6E6D63"/><rect x="383.5" y="226.5" width="9" height="9" fill="#fff" stroke="#6E6D63"/><rect x="384" y="228" width="8" height="1" fill="#6E6D63"/><circle cx="17.5" cy="339.5" r="3.4" fill="#80A8D8" stroke="#24446C" stroke-width="1.1"/><circle cx="17.5" cy="356.5" r="3.4" fill="#C8DCF4" stroke="#24446C" stroke-width="1.1"/><path d="M10.8 352.3L17.8 356.5L10.8 360.7L13 356.5Z" fill="#5A8CCC" stroke="#1E3E6A" stroke-width="0.9"/><rect x="387" y="347" width="7" height="4" fill="#C8E4B0" stroke="#A0C888" stroke-width="0.6"/><g transform="translate(409,226)"><rect x="0.5" y="0.5" width="5" height="5" fill="#C8E0F4" stroke="#3A7AB8"/><rect x="0.5" y="8.5" width="5" height="5" fill="#C8E0F4" stroke="#3A7AB8"/><path d="M6 2.5h6M6 11.5h6" stroke="#3A5A88"/><rect x="7" y="5.5" width="2" height="2" fill="#3A5A88"/><path d="M10 6.5h2" stroke="#3A5A88"/></g><path d="M486 228L489 231L492 228L494 230L491 233L494 236L492 238L489 235L486 238L484 236L487 233L484 230Z" fill="#fff" stroke="#8A8878" stroke-width="1"/><g transform="translate(684,226)"><circle cx="5" cy="4.5" r="3.6" fill="#D0CEC6"/><circle cx="10" cy="5.5" r="3.6" fill="#C4C2BA"/><circle cx="5.5" cy="10" r="3.6" fill="#9E9C94"/></g><path d="M705.5 226.5h10l-5 5z" fill="#fff" stroke="#6E6D63" stroke-width="1"/><rect x="726.5" y="226.5" width="9" height="3" fill="#fff" stroke="#6E6D63"/><rect x="744.5" y="226.5" width="9" height="9" fill="#fff" stroke="#6E6D63"/><rect x="745" y="228" width="8" height="1" fill="#6E6D63"/><path d="M417.5 255V290" stroke="#A0A0A0" stroke-dasharray="1 1"/><path d="M418 255.5H429" stroke="#A0A0A0" stroke-dasharray="1 1"/><path d="M422 272.5H429" stroke="#A0A0A0" stroke-dasharray="1 1"/><path d="M418 290.5H429" stroke="#A0A0A0" stroke-dasharray="1 1"/><g transform="translate(431,250)"><rect x="0.5" y="0.5" width="11" height="11" fill="#F6C890" stroke="#B06A28"/><path d="M6 0v12M0 6h12" stroke="#B06A28"/><rect x="1" y="1" width="4.5" height="4.5" fill="#FCE4BC"/></g><rect x="413.5" y="268.5" width="8" height="8" fill="url(#pmfill)" stroke="#7A8C9C"/><path d="M415 272.5h5" stroke="#000"/><path d="M417.5 270v5" stroke="#000"/><g transform="translate(431,265)"><path d="M0 4L4 0V4Z" fill="#2A4A6A"/><path d="M5 5.5h6M5 7.5h6M5 9.5h6M5 11.5h6" stroke="#7A88B8"/></g><circle cx="436" cy="289" r="3.7" fill="url(#blueball)" stroke="#3A4A88" stroke-width="0.8"/><g transform="translate(14,425)"><rect x="0.5" y="0.5" width="12" height="9" fill="#E6EEF8" stroke="#2A4A80"/><rect x="1" y="1" width="11" height="8" fill="none" stroke="#5A7AB0"/><path d="M3 3.5h6M3 6.5h5" stroke="#2A4A80"/><path d="M4 11.5h5" stroke="#2A4A80" stroke-width="1.5"/></g><path d="M91 426L94 429L97 426L99 428L96 431L99 434L97 436L94 433L91 436L89 434L92 431L89 428Z" fill="#fff" stroke="#3A4A78" stroke-width="1"/><g transform="translate(125,422)"><rect x="4.5" y="2.5" width="10" height="12" fill="#F4F7FB" stroke="#8898B0"/><rect x="7" y="0.5" width="5" height="3" fill="#B8B4A8" stroke="#7A7668"/><path d="M9 7h4M9 9h4M9 11h4" stroke="#5A6A88"/><path d="M0.5 9L3.5 12.5L9 5" fill="none" stroke="#1C50B0" stroke-width="2"/></g><rect x="451.5" y="426.5" width="10" height="10" fill="#E8303A" stroke="#A01A22"/><rect x="453" y="428" width="6" height="2" fill="#F27078" opacity="0.8"/><g transform="translate(474,426)"><path d="M1.5 1.5L11 11M11 1.5L1.5 11" stroke="#B2B0A6" stroke-width="3"/></g><g transform="translate(495,424) scale(1)"><path d="M1.5 1.5L10 10M10 1.5L1.5 10" stroke="#CFCDC4" stroke-width="2.8"/><path d="M5.5 5.5L14 14M14 5.5L5.5 14" stroke="#ABA99F" stroke-width="2.8"/><path d="M2 2L9.5 9.5" stroke="#E6E4DC" stroke-width="1"/></g><rect x="518" y="424" width="1" height="16" fill="#C5C2B2"/><rect x="519" y="424" width="1" height="16" fill="#FFFFFF"/><g transform="translate(527,424)"><path d="M0.5 0.5H7L10.5 4V13.5H0.5Z" fill="#fff" stroke="#7D8FA8"/><path d="M2 4h5M2 6h6M2 8h6M2 10h5" stroke="#7D8FA8"/><path d="M9 9L14 14M14 9L9 14" stroke="#3A4A58" stroke-width="2"/></g><g transform="translate(549,424)"><rect x="9.5" y="0.5" width="5" height="13" fill="#fff" stroke="#5A6A88"/><rect x="10" y="3" width="4" height="3" fill="#5A7AB0"/><rect x="10" y="8" width="4" height="3" fill="#5A7AB0"/><path d="M2.5 8V5.5Q4.5 2.5 6.5 5.5V8" fill="none" stroke="#888" stroke-width="1.2"/><rect x="0.5" y="7.5" width="8" height="6" fill="#F4D040" stroke="#9A7A10"/></g><rect x="568.5" y="421.5" width="22" height="19" rx="3" fill="#F8F9FC" stroke="#A0AEC8"/><g transform="translate(573,424)"><rect x="0.5" y="5.5" width="9" height="7" fill="#D8E2F0" stroke="#4A6A98"/><path d="M3 13.5h4" stroke="#4A6A98"/><rect x="4.5" y="0.5" width="11" height="8" fill="#EEF3FA" stroke="#4A6A98"/><path d="M7 3h6M7 5.5h6" stroke="#4A6A98"/></g><rect x="592.5" y="421.5" width="21" height="19" rx="3" fill="#F8F9FC" stroke="#A0AEC8"/><g transform="translate(595,424)"><rect x="0.5" y="5.5" width="9" height="7" fill="#D8E2F0" stroke="#4A6A98"/><path d="M3 13.5h4" stroke="#4A6A98"/><rect x="4.5" y="0.5" width="11" height="8" fill="#EEF3FA" stroke="#4A6A98"/><path d="M7 2.5l3 3M10 2.5l-3 3" stroke="#D02020" stroke-width="1.2"/><path d="M11.5 3h2M11.5 5h2" stroke="#4A6A98"/></g><rect x="619" y="424" width="1" height="16" fill="#C5C2B2"/><rect x="620" y="424" width="1" height="16" fill="#FFFFFF"/><rect x="627.5" y="428.5" width="11" height="9" fill="url(#wfill)" stroke="#7D8CA8" stroke-width="1"/><rect x="627" y="428" width="12" height="3" fill="#4A6FB5"/><path d="M638.5 431V437.5H628" stroke="#B09A60" fill="none"/><path d="M632 433L636 429" stroke="#333" stroke-width="1"/><circle cx="638" cy="427" r="3" fill="#3AA050" stroke="#1E6A30" stroke-width="0.8"/><g transform="translate(651,424)"><rect x="0.5" y="0.5" width="12" height="9" fill="#E6E4DC" stroke="#A8A69C"/><path d="M3 3.5h6M3 6h6" stroke="#A8A69C"/><path d="M5 10.5h3M3 12h7" stroke="#A8A69C"/></g><path d="M672 429h5l-2.5 3z" fill="#C8C6BA"/><rect x="688.5" y="426.5" width="11" height="12" fill="url(#wfill)" stroke="#B09A60"/><rect x="688" y="426" width="12" height="3" fill="#4A6FB5"/><rect x="692" y="429" width="1" height="9" fill="#7D8CA8"/><path d="M699 424L700.05 425.95L702 427L700.05 428.05L699 430L697.95 428.05L696 427L697.95 425.95Z" fill="#F4D23C" stroke="#B08A18" stroke-width="0.8"/><path d="M710 429h5l-2.5 3z" fill="#000"/><rect x="726.5" y="424.5" width="9" height="3" fill="#fff" stroke="#6E6D63"/><rect x="744.5" y="424.5" width="9" height="9" fill="#fff" stroke="#6E6D63"/><rect x="745" y="426" width="8" height="1" fill="#6E6D63"/><rect x="53" y="500" width="1" height="17" fill="#000"/><rect x="23.5" y="616.5" width="5" height="11" fill="#fff" stroke="#6A7A90"/><rect x="23" y="616" width="6" height="3" fill="#6A7A90"/><path d="M32 614.2L32.98 616.02L34.8 617L32.98 617.98L32 619.8L31.02 617.98L29.2 617L31.02 616.02Z" fill="#F4D23C" stroke="#B08A18" stroke-width="0.8"/><rect x="441" y="617" width="2" height="2" fill="#9C9A8C"/><rect x="442" y="618" width="1" height="1" fill="#fff" opacity="0.7"/><rect x="441" y="621" width="2" height="2" fill="#9C9A8C"/><rect x="442" y="622" width="1" height="1" fill="#fff" opacity="0.7"/><rect x="441" y="625" width="2" height="2" fill="#9C9A8C"/><rect x="442" y="626" width="1" height="1" fill="#fff" opacity="0.7"/><rect x="441" y="629" width="2" height="2" fill="#9C9A8C"/><rect x="442" y="630" width="1" height="1" fill="#fff" opacity="0.7"/></svg>
</body></html>
